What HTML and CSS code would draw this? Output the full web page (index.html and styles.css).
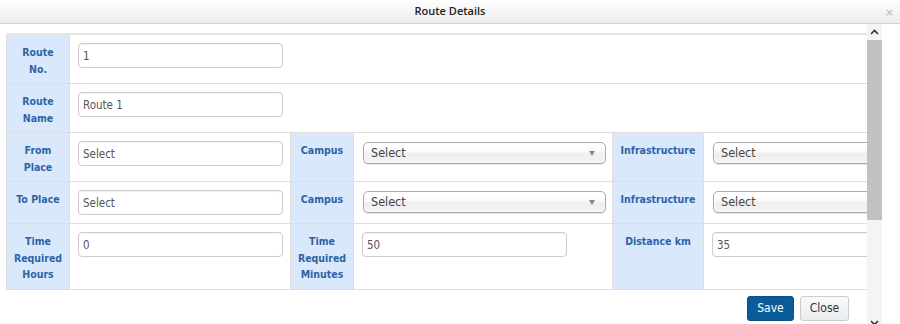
FILE: index.html
```html
<!DOCTYPE html>
<html>
<head>
<meta charset="utf-8">
<link rel="stylesheet" href="styles.css">
</head>
<body>
<div class="dialog">
  <div class="titlebar">
    <span class="title">Route Details</span>
    <span class="close-x">×</span>
  </div>
  <div class="body">
    <div class="content">
      <table class="form">
        <colgroup>
          <col class="c-l1"><col class="c-v1"><col class="c-l2"><col class="c-v2"><col class="c-l3"><col class="c-v3">
        </colgroup>
        <tr>
          <td class="lbl">Route<br>No.</td>
          <td class="val" colspan="5"><input class="inp" value="1"></td>
        </tr>
        <tr>
          <td class="lbl">Route<br>Name</td>
          <td class="val" colspan="5"><input class="inp" value="Route 1"></td>
        </tr>
        <tr>
          <td class="lbl">From<br>Place</td>
          <td class="val"><input class="inp" value="Select"></td>
          <td class="lbl">Campus</td>
          <td class="val"><div class="chosen"><span>Select</span><i class="arrow"></i></div></td>
          <td class="lbl">Infrastructure</td>
          <td class="val"><div class="chosen"><span>Select</span><i class="arrow"></i></div></td>
        </tr>
        <tr>
          <td class="lbl">To Place</td>
          <td class="val"><input class="inp" value="Select"></td>
          <td class="lbl">Campus</td>
          <td class="val"><div class="chosen"><span>Select</span><i class="arrow"></i></div></td>
          <td class="lbl">Infrastructure</td>
          <td class="val"><div class="chosen"><span>Select</span><i class="arrow"></i></div></td>
        </tr>
        <tr>
          <td class="lbl">Time<br>Required<br>Hours</td>
          <td class="val"><input class="inp" value="0"></td>
          <td class="lbl">Time<br>Required<br>Minutes</td>
          <td class="val"><input class="inp" value="50"></td>
          <td class="lbl">Distance km</td>
          <td class="val"><input class="inp" value="35"></td>
        </tr>
      </table>
      <div class="footer">
        <button class="btn btn-save">Save</button>
        <button class="btn btn-close">Close</button>
      </div>
    </div>
    <div class="scrollbar">
      <div class="sb-up"><svg width="9" height="6" viewBox="0 0 9 6"><path d="M1 5 L4.5 1.5 L8 5" fill="none" stroke="#333" stroke-width="1.6"/></svg></div>
      <div class="sb-thumb"></div>
      <div class="sb-track"></div>
      <div class="sb-down"><svg width="9" height="6" viewBox="0 0 9 6"><path d="M1 1 L4.5 4.5 L8 1" fill="none" stroke="#333" stroke-width="1.6"/></svg></div>
    </div>
    <div class="gutter"></div>
  </div>
</div>
</body>
</html>
```
FILE: styles.css
```css
html, body {
  margin: 0;
  padding: 0;
  background: #fff;
}
body {
  width: 900px;
  height: 324px;
  overflow: hidden;
  font-family: "DejaVu Sans Condensed", "DejaVu Sans", sans-serif;
}
.dialog {
  display: flex;
  flex-direction: column;
  height: 324px;
}
.titlebar {
  position: relative;
  height: 23px;
  flex: none;
  border-bottom: 1px solid #cfcfcf;
  background: linear-gradient(#ffffff, #ececec);
  text-align: center;
}
.title {
  display: inline-block;
  font-family: "Open Sans", sans-serif;
  font-size: 11px;
  font-weight: 600;
  color: #222;
  line-height: 15px;
}
.close-x {
  position: absolute;
  right: 6px;
  top: 7px;
  font-family: "DejaVu Sans", sans-serif;
  font-size: 11px;
  line-height: 12px;
  color: #b8b8b8;
}
.body {
  flex: 1;
  display: flex;
  align-items: flex-start;
  min-height: 0;
  overflow: hidden;
}
.content {
  width: 861px;
  flex: none;
  overflow: hidden;
  padding: 9px 0 0 6px;
}
.form {
  border-collapse: collapse;
  table-layout: fixed;
  width: 1000px;
  border: 1px solid #dedede;
  border-top: 2px solid #e6e6e6;
}
.c-l1 { width: 63px; }
.c-v1 { width: 221px; }
.c-l2 { width: 63px; }
.c-v2 { width: 259px; }
.c-l3 { width: 91px; }
.c-v3 { width: 303px; }
.form td {
  border: 1px solid #dedede;
  vertical-align: top;
}
.lbl {
  background: #dae8fc;
  color: #2b65a4;
  font-weight: bold;
  font-size: 10.5px;
  line-height: 16.5px;
  text-align: center;
  padding: 9px 2px 6px;
}
.val {
  padding: 8px;
}
.inp {
  display: block;
  box-sizing: border-box;
  width: 205px;
  height: 25px;
  border: 1px solid #cccccc;
  border-radius: 4px;
  padding: 0 4px;
  font-family: "DejaVu Sans Condensed", "DejaVu Sans", sans-serif;
  font-size: 11.5px;
  color: #555;
  background: #fff;
  box-shadow: inset 0 1px 1px rgba(0,0,0,0.05);
  outline: none;
}
.chosen {
  position: relative;
  box-sizing: border-box;
  width: 243px;
  height: 22px;
  margin-top: 1px;
  margin-left: 1px;
  border: 1px solid #aaa;
  border-radius: 5px;
  background: linear-gradient(#ffffff 20%, #f6f6f6 50%, #eeeeee 52%, #f4f4f4 100%);
  box-shadow: inset 0 0 3px #fff, 0 1px 1px rgba(0,0,0,0.1);
  padding: 0 0 0 7px;
  font-size: 12.5px;
  line-height: 20px;
  color: #444;
}
.arrow {
  position: absolute;
  right: 10px;
  top: 8px;
  width: 0;
  height: 0;
  border-left: 3.5px solid transparent;
  border-right: 3.5px solid transparent;
  border-top: 5px solid #888;
}
.footer {
  display: flex;
  justify-content: flex-end;
  gap: 6px;
  margin-top: 6px;
  padding-right: 18px;
}
.btn {
  box-sizing: border-box;
  height: 25px;
  border-radius: 3px;
  font-family: "DejaVu Sans Condensed", "DejaVu Sans", sans-serif;
  font-size: 12px;
  padding: 0;
}
.btn-save {
  width: 47px;
  background: #0b5b98;
  border: 1px solid #0a4f85;
  color: #fff;
}
.btn-close {
  width: 49px;
  background: linear-gradient(#fafafa, #ececec);
  border: 1px solid #cccccc;
  color: #333;
}
.scrollbar {
  width: 15px;
  height: 307px;
  flex: none;
  display: flex;
  flex-direction: column;
  background: #f4f4f4;
}
.sb-up, .sb-down {
  height: 16px;
  flex: none;
  display: flex;
  align-items: center;
  justify-content: center;
}
.sb-thumb {
  height: 180px;
  flex: none;
  background: #c1c1c1;
}
.sb-track { flex: 1; }
.gutter {
  flex: 1;
  align-self: stretch;
  background: #fff;
}
```
